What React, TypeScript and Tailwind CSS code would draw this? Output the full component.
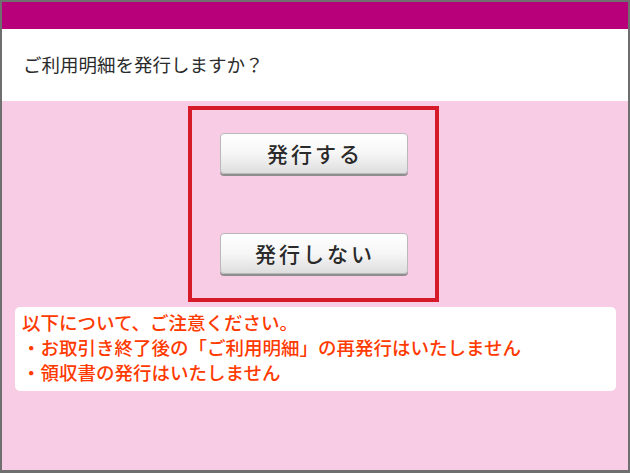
const jp = { fontFamily: '"Noto Sans CJK JP", "Noto Sans", sans-serif' };

const ActionButton = ({ label }: { label: string }) => (
  <button className="w-[188px] h-[41px] rounded-[4px] border border-[#b9b9b9] bg-gradient-to-b from-white via-[#f6f6f6] to-[#dedede] shadow-[0_2px_0_#8e8e8e] text-[21px] font-medium tracking-[3px] pl-[3px] text-[#2a2a2a] flex items-center justify-center">
    {label}
  </button>
);

export default function App() {
  return (
    <div
      className="w-[630px] h-[473px] border-2 border-b-[3px] border-[#6f6f6f] flex flex-col bg-[#f9cce6]"
      style={jp}
    >
      <div className="h-[27px] bg-[#b8007a] shrink-0"></div>
      <div className="h-[72px] bg-white flex items-center pl-[21px] shrink-0">
        <span className="text-[18.5px] text-[#2b2b2b]">ご利用明細を発行しますか？</span>
      </div>

      <div className="flex-1 flex flex-col pt-[5px]">
        <div className="ml-[186px] w-[251px] h-[196px] border-4 border-[#d71a2a] flex flex-col items-center pt-[23px] gap-[59px]">
          <ActionButton label="発行する" />
          <ActionButton label="発行しない" />
        </div>

        <div className="mt-[5px] ml-[13px] w-[601px] h-[84px] bg-white rounded-[5px] px-[7px] pt-[3px] text-[18.5px] leading-[25px] font-medium text-[#ff3a00]">
          <p>以下について、ご注意ください。</p>
          <p>・お取引き終了後の「ご利用明細」の再発行はいたしません</p>
          <p>・領収書の発行はいたしません</p>
        </div>
      </div>
    </div>
  );
}
